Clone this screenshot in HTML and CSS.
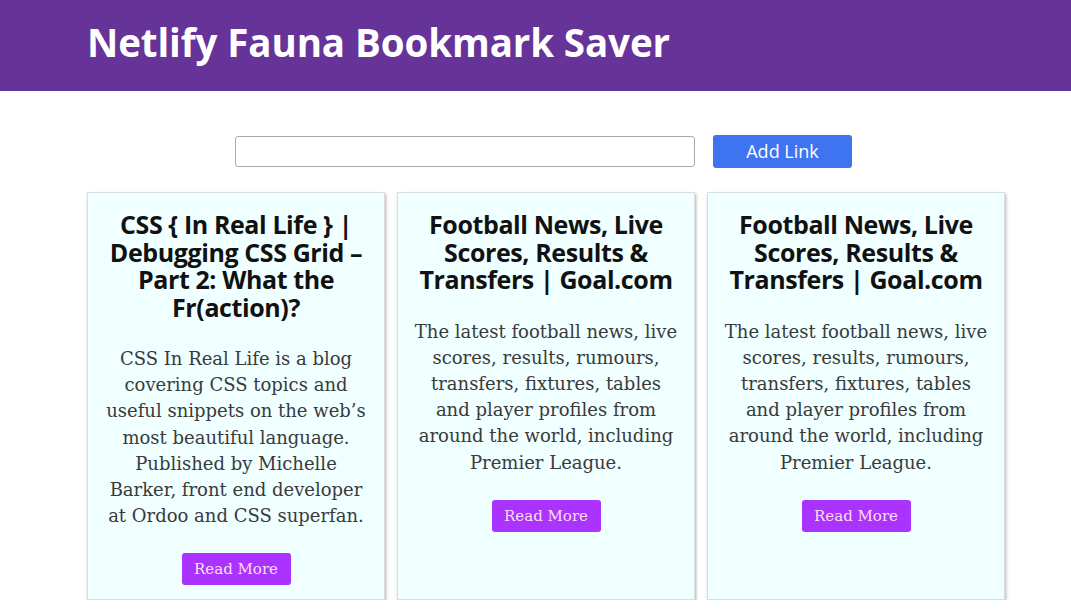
FILE: index.html
```html
<!DOCTYPE html>
<html>
<head>
<meta charset="utf-8">
<link rel="stylesheet" href="styles.css">
</head>
<body>
<header class="header">
  <h1 class="brand">Netlify Fauna Bookmark Saver</h1>
</header>
<main class="main">
  <form class="add-form">
    <input class="url-input" type="text">
    <button class="add-btn" type="button">Add Link</button>
  </form>
  <section class="grid">
    <article class="card">
      <h2 class="card-title">CSS { In Real Life } | Debugging CSS Grid – Part 2: What the Fr(action)?</h2>
      <p class="card-text">CSS In Real Life is a blog covering CSS topics and useful snippets on the web’s most beautiful language. Published by Michelle Barker, front end developer at Ordoo and CSS superfan.</p>
      <a class="read-more">Read More</a>
    </article>
    <article class="card">
      <h2 class="card-title">Football News, Live Scores, Results &amp; Transfers | Goal.com</h2>
      <p class="card-text">The latest football news, live scores, results, rumours, transfers, fixtures, tables and player profiles from around the world, including Premier League.</p>
      <a class="read-more">Read More</a>
    </article>
    <article class="card">
      <h2 class="card-title">Football News, Live Scores, Results &amp; Transfers | Goal.com</h2>
      <p class="card-text">The latest football news, live scores, results, rumours, transfers, fixtures, tables and player profiles from around the world, including Premier League.</p>
      <a class="read-more">Read More</a>
    </article>
  </section>
</main>
</body>
</html>
```
FILE: styles.css
```css
* { box-sizing: border-box; }
body {
  margin: 0;
  font-family: "DejaVu Serif", serif;
  background: #fff;
}
.header {
  background: #663399;
  height: 91px;
  padding: 0 0 8px 87px;
  display: flex;
  align-items: center;
}
.brand {
  margin: 0;
  color: #fff;
  font-family: "Open Sans", sans-serif;
  font-weight: 700;
  font-size: 38.5px;
  letter-spacing: -0.1px;
}
.main {
  padding: 44px 0 0 87px;
}
.add-form {
  display: flex;
  align-items: center;
  gap: 18px;
  margin-left: 148px;
}
.url-input {
  width: 460px;
  height: 31px;
  border: 1px solid #aaa;
  border-radius: 3px;
  background: #fff;
}
.add-btn {
  width: 139px;
  height: 33px;
  border: none;
  border-radius: 3px;
  background: #3e74ef;
  color: #fff;
  font-family: "Open Sans", sans-serif;
  font-size: 18px;
  padding-bottom: 2px;
}
.grid {
  margin-top: 24px;
  display: grid;
  grid-template-columns: repeat(3, 298px);
  gap: 12px;
}
.card {
  background: #f0ffff;
  border: 1px solid #ddd;
  box-shadow: 1px 2px 3px rgba(0,0,0,0.3);
  min-height: 408px;
  padding: 18px 16px 14px;
  text-align: center;
  display: flex;
  flex-direction: column;
  align-items: center;
}
.card-title {
  margin: 0;
  font-family: "Open Sans", sans-serif;
  font-weight: 700;
  font-size: 25px;
  line-height: 27.5px;
  color: #111;
  letter-spacing: -0.4px;
}
.card-text {
  margin: 25px 0 0;
  font-size: 18px;
  line-height: 26.2px;
  color: #3a3a3a;
}
.read-more {
  margin-top: 24px;
  width: 109px;
  height: 32px;
  line-height: 32px;
  background: #aa33ff;
  color: #fde;
  border-radius: 3px;
  font-size: 15px;
}
```
